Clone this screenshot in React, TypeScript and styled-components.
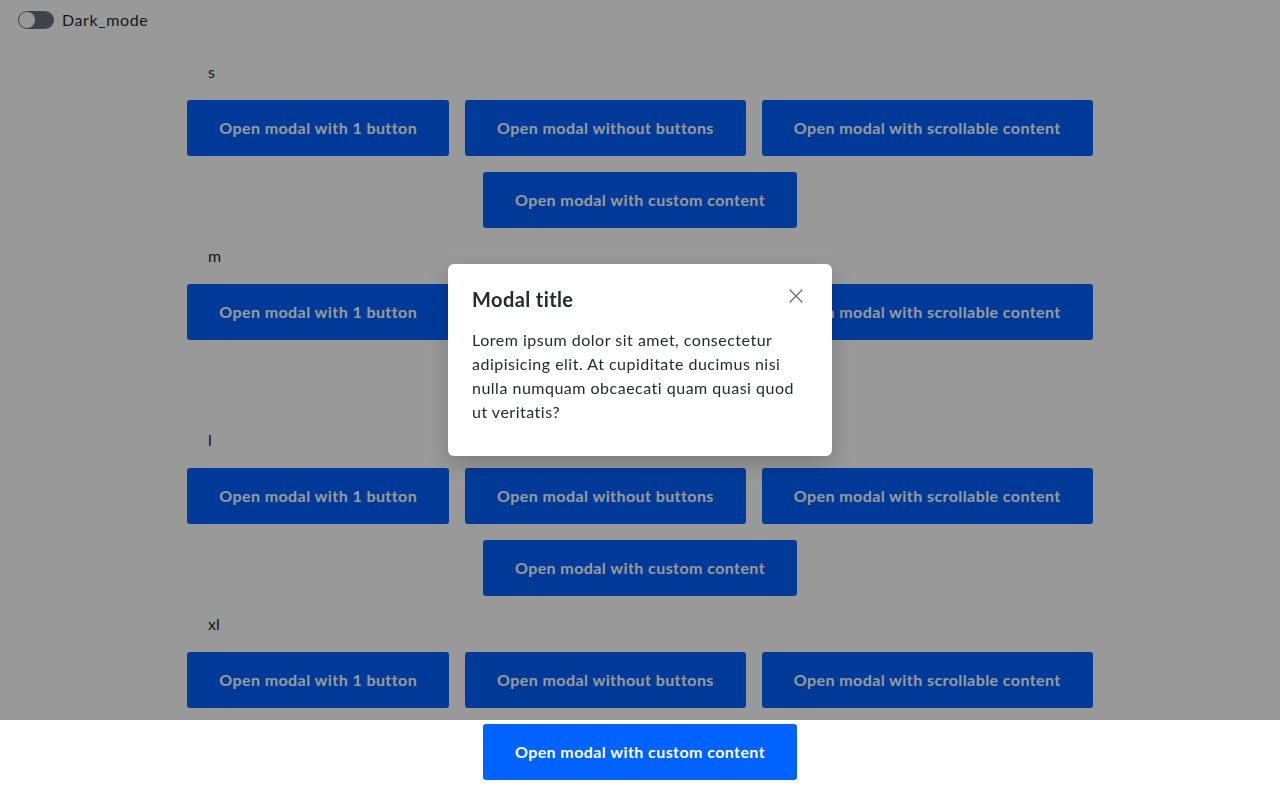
import React, { useState } from "react";
import styled, { createGlobalStyle } from "styled-components";

const GlobalStyle = createGlobalStyle`
  body {
    margin: 0;
    background: #ffffff;
    font-family: Lato, "Noto Sans", sans-serif;
    color: #252a31;
  }
  * { box-sizing: border-box; }
`;

const TopBar = styled.div`
  display: flex;
  align-items: center;
  gap: 8px;
  padding: 8px 18px;
  height: 40px;
`;

const SwitchTrack = styled.button<{ $on: boolean }>`
  position: relative;
  width: 36px;
  height: 18px;
  padding: 0;
  border: none;
  border-radius: 9px;
  background: ${(p) => (p.$on ? "#0062ff" : "#6b7180")};
  cursor: pointer;
`;

const SwitchKnob = styled.span<{ $on: boolean }>`
  position: absolute;
  top: 1px;
  left: ${(p) => (p.$on ? "19px" : "1px")};
  width: 16px;
  height: 16px;
  border-radius: 50%;
  background: #ffffff;
`;

const SwitchLabel = styled.span`
  font-size: 16px;
  line-height: 24px;
  letter-spacing: 0.6px;
`;

const Main = styled.main`
  width: 960px;
  margin: 0 auto;
  padding: 20px 0 24px;
  display: flex;
  flex-direction: column;
  gap: 16px;
`;

const Section = styled.section`
  display: flex;
  flex-direction: column;
  gap: 16px;
`;

const SizeLabel = styled.div`
  padding-left: 48px;
  font-size: 16px;
  line-height: 24px;
`;

const ButtonRow = styled.div`
  display: flex;
  flex-wrap: wrap;
  justify-content: center;
  gap: 16px;
`;

const OpenButton = styled.button`
  height: 56px;
  padding: 0 32px 2px;
  border: none;
  border-radius: 3px;
  background: #0062ff;
  color: #ffffff;
  font-family: inherit;
  font-size: 16px;
  font-weight: 700;
  letter-spacing: 0.42px;
  cursor: pointer;
`;

const Overlay = styled.div`
  position: fixed;
  top: 0;
  left: 0;
  width: 100%;
  height: 720px;
  background: rgba(0, 0, 0, 0.4);
  display: flex;
  align-items: center;
  justify-content: center;
`;

const Modal = styled.div`
  width: 384px;
  background: #ffffff;
  border-radius: 6px;
  padding: 23px 24px 32px;
  box-shadow: 0 8px 24px rgba(0, 0, 0, 0.2);
  display: flex;
  flex-direction: column;
  gap: 17px;
`;

const ModalHeader = styled.div`
  display: flex;
  align-items: center;
  justify-content: space-between;
`;

const ModalTitle = styled.h2`
  margin: 0;
  font-size: 20px;
  line-height: 24px;
  font-weight: 700;
  letter-spacing: 0.4px;
`;

const CloseButton = styled.button`
  display: flex;
  align-items: center;
  justify-content: center;
  width: 24px;
  height: 24px;
  margin-top: -6px;
  padding: 0;
  border: none;
  background: none;
  color: #5f6b7a;
  cursor: pointer;
`;

const ModalBody = styled.p`
  margin: 0;
  font-size: 16px;
  line-height: 24px;
  letter-spacing: 0.5px;
`;

const sizes = ["s", "m", "l", "xl"];
const buttons = [
  "Open modal with 1 button",
  "Open modal without buttons",
  "Open modal with scrollable content",
  "Open modal with custom content",
];

export default function App() {
  const [dark, setDark] = useState(false);
  const [open, setOpen] = useState(true);

  return (
    <>
      <GlobalStyle />
      <TopBar>
        <SwitchTrack $on={dark} onClick={() => setDark(!dark)}>
          <SwitchKnob $on={dark} />
        </SwitchTrack>
        <SwitchLabel>Dark_mode</SwitchLabel>
      </TopBar>
      <Main>
        {sizes.map((size) => (
          <Section key={size}>
            <SizeLabel>{size}</SizeLabel>
            <ButtonRow>
              {buttons.map((b) => (
                <OpenButton key={b} onClick={() => setOpen(true)}>
                  {b}
                </OpenButton>
              ))}
            </ButtonRow>
          </Section>
        ))}
      </Main>
      {open && (
        <Overlay>
          <Modal>
            <ModalHeader>
              <ModalTitle>Modal title</ModalTitle>
              <CloseButton onClick={() => setOpen(false)} aria-label="Close">
                <svg width="16" height="16" viewBox="0 0 16 16" fill="none">
                  <path d="M2 2L14 14M14 2L2 14" stroke="currentColor" strokeWidth="1.2" strokeLinecap="round" />
                </svg>
              </CloseButton>
            </ModalHeader>
            <ModalBody>
              Lorem ipsum dolor sit amet, consectetur adipisicing elit. At cupiditate ducimus nisi nulla
              numquam obcaecati quam quasi quod ut veritatis?
            </ModalBody>
          </Modal>
        </Overlay>
      )}
    </>
  );
}
